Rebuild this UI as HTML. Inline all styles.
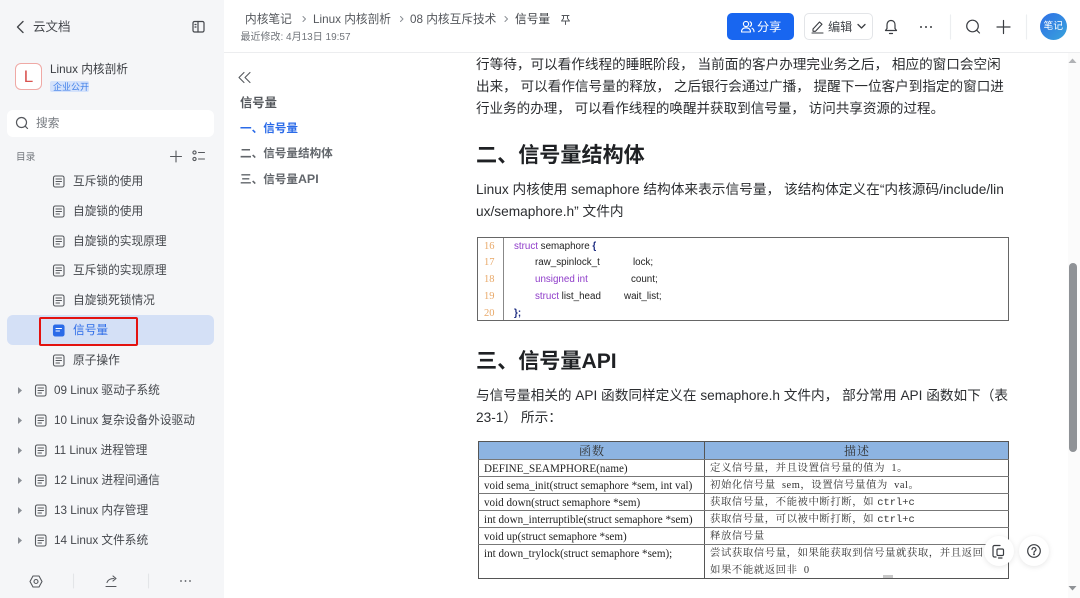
<!DOCTYPE html>
<html><head><meta charset="utf-8">
<style>
html,body{margin:0;padding:0;width:1080px;height:598px;overflow:hidden;background:#fff}
body{position:relative;font-family:"Liberation Sans","Noto Sans CJK SC",sans-serif;color:#262626}
.t{position:absolute;white-space:nowrap;line-height:20px;height:20px}
.b{position:absolute}
svg{position:absolute;overflow:visible;fill:none;stroke-linecap:round;stroke-linejoin:round}
.n{font-size:11.7px;color:#44474c;margin-top:1px}
.p{font-size:13.7px;color:#2b2d30;left:476px}
.h{font-size:21.1px;font-weight:700;color:#1f2124;left:476px}
.bc{font-size:11.7px;color:#55585d;top:10px}
.cd{font-size:9.8px;color:#222;font-family:"Liberation Sans",sans-serif;margin-top:1px}
.ln{font-size:10.5px;color:#e8a868;font-family:"Liberation Serif",serif;left:484px;margin-top:1px}
.tf{font-size:11.1px;color:#222;font-family:"Liberation Serif","Noto Serif CJK SC",serif;left:484px;margin-top:1px}
.td{font-size:10.4px;color:#333;font-family:"Liberation Serif","Noto Serif CJK SC",serif;left:710px;letter-spacing:.55px;margin-top:1px}
.td i{font-style:normal;font-family:"Liberation Mono",monospace;letter-spacing:0}
.line{position:absolute;left:478px;width:531px;height:1px;background:#777}
</style></head><body>

<!-- sidebar -->
<div class="b" style="left:0;top:0;width:224px;height:598px;background:#f5f6f8"></div>
<svg style="left:0;top:0" width="224" height="60" stroke="#44474c" stroke-width="1.2">
<path d="M23 21.500l-5.500 5.500 5.500 5.500" stroke-width="1.400"/>
<rect x="193" y="21.500" width="11" height="10.500" rx="1.500"/><path d="M198 21.500v10.500M195 24.500h1M195 27h1"/>
</svg>
<div class="t" style="left:33px;top:17px;font-size:12.500px;color:#44474c">云文档</div>

<div class="b" style="left:15px;top:63px;width:25px;height:25px;border:1px solid #efa9a5;border-radius:6px;background:#fff"></div>
<div class="t" style="left:15px;top:67px;width:27px;text-align:center;font-size:17px;color:#d9534f">L</div>
<div class="t" style="left:50px;top:60px;font-size:11.700px;color:#3a3d42">Linux 内核剖析</div>
<div class="b" style="left:50px;top:81px;width:39px;height:11px;background:#d4e2fb;border-radius:2px"></div>
<div class="t" style="left:53px;top:76.500px;font-size:9px;color:#3f7fe8">企业公开</div>

<div class="b" style="left:7px;top:110px;width:207px;height:27px;background:#fff;border-radius:6px"></div>
<svg style="left:0;top:110px" width="40" height="27" stroke="#55585d" stroke-width="1.200"><circle cx="21.500" cy="12.500" r="5"/><path d="M25.200 16.200l2.300 2.300"/></svg>
<div class="t" style="left:36px;top:113.500px;font-size:11.700px;color:#767a80">搜索</div>

<div class="t" style="left:16px;top:147.500px;font-size:9.700px;color:#70747a">目录</div>
<svg style="left:165px;top:148px" width="50" height="18" stroke="#55585d" stroke-width="1.100">
<path d="M11 3v11M5.500 8.500h11"/><circle cx="29.500" cy="4.500" r="1.600"/><circle cx="29.500" cy="11" r="1.600"/><path d="M33.500 4.500h6M33.500 11h6"/>
</svg>

<div class="b" style="left:7px;top:315px;width:207px;height:30px;background:#d4e0f6;border-radius:6px"></div>

<svg style="left:0;top:0" width="224" height="598" stroke="#55585d" stroke-width="1.100">
<g><rect x="53.500" y="176" width="10.500" height="11" rx="1.800"/><path d="M56 179h5.500M56 181.500h5.500M56 184h3.500"/></g>
<g><rect x="53.500" y="206" width="10.500" height="11" rx="1.800"/><path d="M56 209h5.500M56 211.500h5.500M56 214h3.500"/></g>
<g><rect x="53.500" y="236" width="10.500" height="11" rx="1.800"/><path d="M56 239h5.500M56 241.500h5.500M56 244h3.500"/></g>
<g><rect x="53.500" y="265" width="10.500" height="11" rx="1.800"/><path d="M56 268h5.500M56 270.500h5.500M56 273h3.500"/></g>
<g><rect x="53.500" y="295" width="10.500" height="11" rx="1.800"/><path d="M56 298h5.500M56 300.500h5.500M56 303h3.500"/></g>
<rect x="53.500" y="325" width="10.500" height="11" rx="1.800" fill="#2b6be8" stroke="#2b6be8"/><path d="M56 328.500h5.500M56 331h3.500" stroke="#fff"/>
<g><rect x="53.500" y="355" width="10.500" height="11" rx="1.800"/><path d="M56 358h5.500M56 360.500h5.500M56 363h3.500"/></g>
<g><rect x="35.500" y="385" width="10.500" height="11" rx="1.800"/><path d="M38 388h5.500M38 390.500h5.500M38 393h3.500"/></g>
<g><rect x="35.500" y="415" width="10.500" height="11" rx="1.800"/><path d="M38 418h5.500M38 420.500h5.500M38 423h3.500"/></g>
<g><rect x="35.500" y="445" width="10.500" height="11" rx="1.800"/><path d="M38 448h5.500M38 450.500h5.500M38 453h3.500"/></g>
<g><rect x="35.500" y="475" width="10.500" height="11" rx="1.800"/><path d="M38 478h5.500M38 480.500h5.500M38 483h3.500"/></g>
<g><rect x="35.500" y="505" width="10.500" height="11" rx="1.800"/><path d="M38 508h5.500M38 510.500h5.500M38 513h3.500"/></g>
<g><rect x="35.500" y="535" width="10.500" height="11" rx="1.800"/><path d="M38 538h5.500M38 540.500h5.500M38 543h3.500"/></g>
<g fill="#8b8f95" stroke="none">
<path d="M18 387l4 3.500-4 3.500z"/><path d="M18 417l4 3.500-4 3.500z"/><path d="M18 447l4 3.500-4 3.500z"/><path d="M18 477l4 3.500-4 3.500z"/><path d="M18 507l4 3.500-4 3.500z"/><path d="M18 537l4 3.500-4 3.500z"/>
</g>
</svg>

<div class="t n" style="left:73px;top:171px">互斥锁的使用</div>
<div class="t n" style="left:73px;top:201px">自旋锁的使用</div>
<div class="t n" style="left:73px;top:231px">自旋锁的实现原理</div>
<div class="t n" style="left:73px;top:260px">互斥锁的实现原理</div>
<div class="t n" style="left:73px;top:290px">自旋锁死锁情况</div>
<div class="t n" style="left:73px;top:320px;color:#2b6be8">信号量</div>
<div class="t n" style="left:73px;top:350px">原子操作</div>
<div class="t n" style="left:54px;top:380px">09 Linux 驱动子系统</div>
<div class="t n" style="left:54px;top:410px">10 Linux 复杂设备外设驱动</div>
<div class="t n" style="left:54px;top:440px">11 Linux 进程管理</div>
<div class="t n" style="left:54px;top:470px">12 Linux 进程间通信</div>
<div class="t n" style="left:54px;top:500px">13 Linux 内存管理</div>
<div class="t n" style="left:54px;top:530px">14 Linux 文件系统</div>

<div class="b" style="left:39px;top:317px;width:95px;height:25px;border:2px solid #e3120f;border-radius:2px"></div>

<div class="b" style="left:0;top:565px;width:224px;height:33px;background:#f5f6f8"></div>
<svg style="left:0;top:565px" width="224" height="33" stroke="#55585d" stroke-width="1.100">
<path d="M33 11h6l3 5.500-3 5.500h-6l-3-5.500z"/><circle cx="36" cy="16.500" r="2"/>
<path d="M106 21.500h10M107 17.500c1-3 3.500-4 7-4M113 11l3 2.500-3 2.500"/>
<path d="M73.500 9v14M148.500 9v14" stroke="#e3e5e8"/>
<g fill="#55585d" stroke="none"><circle cx="181" cy="16" r=".9"/><circle cx="185.500" cy="16" r=".9"/><circle cx="190" cy="16" r=".9"/></g>
</svg>

<!-- top header -->
<div class="b" style="left:224px;top:52px;width:856px;height:1px;background:#ecedef"></div>
<div class="t bc" style="left:245px">内核笔记</div>
<div class="t bc" style="left:313px">Linux 内核剖析</div>
<div class="t bc" style="left:410px">08 内核互斥技术</div>
<div class="t bc" style="left:515px;color:#3a3d42">信号量</div>
<svg style="left:0;top:0" width="600" height="40" stroke="#8b8f95" stroke-width="1">
<path d="M303 16.500l2.500 2.500-2.500 2.500M400.500 16.500l2.500 2.500-2.500 2.500M505 16.500l2.500 2.500-2.500 2.500"/>
<path d="M562 15.500h7M563.500 15.500v3l-2 2.500h8l-2-2.500v-3M565.500 21v3.500" stroke="#55585d"/>
</svg>
<div class="t" style="left:240.500px;top:27.500px;font-size:10px;color:#70747a">最近修改: 4月13日 19:57</div>

<div class="b" style="left:727px;top:13px;width:67px;height:27px;background:#1866f0;border-radius:5px"></div>
<svg style="left:740px;top:20px" width="16" height="14" stroke="#fff" stroke-width="1.100"><circle cx="6" cy="4" r="2.600"/><path d="M1.500 12c0-3 2-4.200 4.500-4.200S10.500 9 10.500 12zM10 1.800a2.500 2.500 0 0 1 0 4.600M12 8.200c1.300.6 2 1.800 2 3.500"/></svg>
<div class="t" style="left:757px;top:17px;font-size:12.200px;color:#fff">分享</div>

<div class="b" style="left:804px;top:13px;width:67px;height:25px;border:1px solid #e3e5e8;border-radius:5px"></div>
<svg style="left:811px;top:19px" width="62" height="16" stroke="#3a3d42" stroke-width="1.100"><path d="M2 10l6.500-7 2.500 2.300-6.500 7H2zM1 14h11"/><path d="M47 5.500l3.500 3.500 3.500-3.500" stroke-width="1.300"/></svg>
<div class="t" style="left:828px;top:17px;font-size:12.200px;color:#44474c">编辑</div>

<svg style="left:880px;top:13px" width="200" height="28" stroke="#3a3d42" stroke-width="1.200">
<path d="M11 7.500c-2.600 0-4 2-4 4.500v3.500l-1.500 2h11l-1.500-2V12c0-2.500-1.400-4.500-4-4.500zM9.500 20.500h3"/>
<g fill="#3a3d42" stroke="none"><circle cx="41" cy="14" r="1"/><circle cx="46" cy="14" r="1"/><circle cx="51" cy="14" r="1"/></g>
<path d="M70.500 2v24M146.500 2v24" stroke="#eceef0"/>
<circle cx="92.500" cy="13" r="5.800"/><path d="M96.800 17.300l2.700 2.700"/>
<path d="M123.500 7.500v13M117 14h13"/>
</svg>
<div class="b" style="left:1040px;top:13px;width:27px;height:27px;border-radius:50%;background:linear-gradient(135deg,#2f6fe6,#38a3dc)"></div>
<div class="t" style="left:1043.500px;top:17px;font-size:9.800px;color:#fff">笔记</div>

<!-- TOC -->
<svg style="left:238px;top:71px" width="16" height="14" stroke="#55585d" stroke-width="1.100"><path d="M6 1.500L1 6.500l5 5M12 1.500l-5 5 5 5"/></svg>
<div class="t" style="left:240px;top:93px;font-size:12.300px;font-weight:700;color:#55585d">信号量</div>
<div class="t" style="left:240px;top:118.500px;font-size:11.600px;font-weight:700;color:#2b6be8">一、信号量</div>
<div class="t" style="left:240px;top:143.500px;font-size:11.600px;font-weight:700;color:#62666b">二、信号量结构体</div>
<div class="t" style="left:240px;top:168.500px;font-size:11.600px;font-weight:700;color:#62666b">三、信号量<span style="font-size:12.400px">API</span></div>

<!-- article -->
<div class="t p" style="top:55px;font-size:13.62px">行等待，可以看作线程的睡眠阶段， 当前面的客户办理完业务之后， 相应的窗口会空闲</div>
<div class="t p" style="top:77px;font-size:13.6px">出来， 可以看作信号量的释放， 之后银行会通过广播， 提醒下一位客户到指定的窗口进</div>
<div class="t p" style="top:99px;font-size:13.55px">行业务的办理， 可以看作线程的唤醒并获取到信号量， 访问共享资源的过程。</div>

<div class="t h" style="top:146px">二、信号量结构体</div>
<div class="t p" style="top:180px">Linux 内核使用 semaphore 结构体来表示信号量， 该结构体定义在“内核源码/include/lin</div>
<div class="t p" style="top:202px">ux/semaphore.h” 文件内</div>

<!-- code image -->
<div class="b" style="left:477px;top:237px;width:530px;height:82px;border:1px solid #666"></div>
<div class="b" style="left:503px;top:238px;width:1px;height:82px;background:#888"></div>
<div class="t ln" style="top:235.500px">16</div>
<div class="t ln" style="top:252px">17</div>
<div class="t ln" style="top:269px">18</div>
<div class="t ln" style="top:285.500px">19</div>
<div class="t ln" style="top:302.500px">20</div>
<div class="t cd" style="left:514px;top:235.500px"><span style="color:#8e3bc9">struct</span> semaphore <b style="color:#1a2a80">{</b></div>
<div class="t cd" style="left:535px;top:252px">raw_spinlock_t</div>
<div class="t cd" style="left:633px;top:252px">lock;</div>
<div class="t cd" style="left:535px;top:269px;color:#8e3bc9">unsigned int</div>
<div class="t cd" style="left:631px;top:269px">count;</div>
<div class="t cd" style="left:535px;top:285.500px"><span style="color:#8e3bc9">struct</span> list_head</div>
<div class="t cd" style="left:624px;top:285.500px">wait_list;</div>
<div class="t cd" style="left:514px;top:302.500px;color:#1a2a80"><b>};</b></div>

<div class="t h" style="top:352px">三、信号量API</div>
<div class="t p" style="top:386px;font-size:13.65px">与信号量相关的 API 函数同样定义在 semaphore.h 文件内， 部分常用 API 函数如下（表</div>
<div class="t p" style="top:408px">23-1） 所示：</div>

<!-- function table image -->
<div class="b" style="left:478px;top:442px;width:531px;height:17px;background:#8db4e2"></div>
<div class="b" style="left:478px;top:441px;width:529px;height:136px;border:1px solid #555"></div>
<div class="b" style="left:704px;top:441px;width:1px;height:137px;background:#555"></div>
<div class="line" style="top:459px"></div>
<div class="line" style="top:476px"></div>
<div class="line" style="top:493px"></div>
<div class="line" style="top:510px"></div>
<div class="line" style="top:527px"></div>
<div class="line" style="top:544px"></div>
<div class="t" style="left:579px;top:440.500px;font-size:12px;letter-spacing:1px;color:#333;font-family:'Noto Serif CJK SC',serif">函数</div>
<div class="t" style="left:844px;top:440.500px;font-size:12px;letter-spacing:1px;color:#333;font-family:'Noto Serif CJK SC',serif">描述</div>
<div class="t tf" style="top:458px">DEFINE_SEAMPHORE(name)</div>
<div class="t tf" style="top:475px">void sema_init(struct semaphore *sem, int val)</div>
<div class="t tf" style="top:492px">void down(struct semaphore *sem)</div>
<div class="t tf" style="top:509px">int down_interruptible(struct semaphore *sem)</div>
<div class="t tf" style="top:526px">void up(struct semaphore *sem)</div>
<div class="t tf" style="top:543px">int down_trylock(struct semaphore *sem);</div>
<div class="t td" style="top:458px">定义信号量，并且设置信号量的值为 &nbsp;1。</div>
<div class="t td" style="top:475px">初始化信号量 &nbsp;sem，设置信号量值为 &nbsp;val。</div>
<div class="t td" style="top:492px">获取信号量，不能被中断打断，如 <i>ctrl+c</i></div>
<div class="t td" style="top:509px">获取信号量，可以被中断打断，如 <i>ctrl+c</i></div>
<div class="t td" style="top:526px">释放信号量</div>
<div class="t td" style="top:543px">尝试获取信号量，如果能获取到信号量就获取，并且返回</div>
<div class="t td" style="top:560px">如果不能就返回非 &nbsp;0</div>

<!-- floating buttons -->
<div class="b" style="left:984px;top:536px;width:30px;height:30px;border-radius:50%;background:#fff;box-shadow:0 1px 6px rgba(0,0,0,.1)"></div>
<div class="b" style="left:1019px;top:536px;width:30px;height:30px;border-radius:50%;background:#fff;box-shadow:0 1px 6px rgba(0,0,0,.1)"></div>
<svg style="left:984px;top:536px" width="65" height="30" stroke="#3a3d42" stroke-width="1.200">
<path d="M12 21h-1.500a1.500 1.500 0 0 1-1.500-1.500V11a1.500 1.500 0 0 1 1.500-1.500H16"/><rect x="13" y="13" width="6.500" height="6.500" rx="1.200"/><path d="M14.500 22h3.500"/>
<circle cx="50" cy="15" r="6.300"/><path d="M48 13.500c0-2.600 4-2.600 4 0 0 1.500-2 1.500-2 3"/><circle cx="50" cy="18.300" r=".4"/>
</svg>

<!-- scrollbar -->
<div class="b" style="left:1068px;top:53px;width:12px;height:545px;background:#fbfbfb"></div>
<div class="b" style="left:1069px;top:263px;width:8px;height:189px;background:#8f9296;border-radius:4px"></div>
<svg style="left:1068px;top:56px" width="12" height="540" stroke="none"><path d="M0.500 7L4.500 2.500 8.500 7z" fill="#b0b2b5"/><path d="M0.500 530l4 4.500 4-4.500z" fill="#8f9296"/></svg>
<div class="b" style="left:883px;top:575px;width:10px;height:3px;background:#c8c8c8"></div>

</body></html>
